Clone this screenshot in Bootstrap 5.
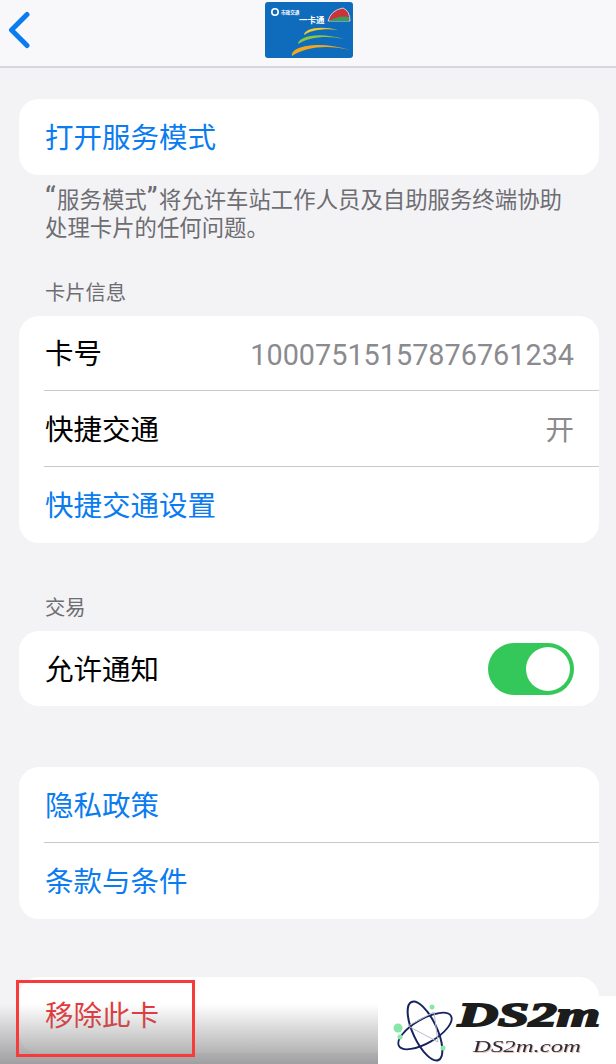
<!DOCTYPE html>
<html lang="zh">
<head>
  <meta charset="UTF-8" />
  <meta name="viewport" content="width=device-width, initial-scale=1">
  <title>一卡通</title>
  <link href="https://cdn.jsdelivr.net/npm/bootstrap@5.3.3/dist/css/bootstrap.min.css" rel="stylesheet">
  <style>
    html, body { height: 1064px; overflow: hidden; }
    body { background: #f3f3f6; font-family: "Roboto", "Noto Sans CJK SC", sans-serif; color: #000; position: relative; }
    .top-bar { height: 68px; background: #f8f8fa; border-bottom: 2px solid #d8d8dc; padding-left: 8px; }
    .back-icon { display: block; }
    .card-pic { display: block; margin-top: 2px; }
    .page-body { padding: 31px 17px 0 19px; }
    .group-box { background: #fff; border-radius: 20px; overflow: hidden; }
    .row-item { height: 75.7px; margin-left: 25px; padding: 5px 25px 0 1px; font-size: 28.5px; line-height: 1; border-bottom: 1px solid #c9c9cc; }
    .row-item:last-child { border-bottom: 0; }
    .row-blue { color: #0a7cf0; }
    .row-value { color: #8b8b8f; }
    .row-num { font-size: 28.8px; letter-spacing: 0; }
    .group-note { color: #6d6d72; font-size: 22.4px; line-height: 28px; padding: 8px 26px 0 26px; }
    .quote-mark { font-size: 30px; line-height: 1; letter-spacing: 1.5px; }
    .group-head { color: #6d6d72; font-size: 20.3px; line-height: 28px; padding-left: 26px; margin-bottom: 9px; }
    .head-first { margin-top: 37px; }
    .head-second { margin-top: 51px; }
    .gap-big { margin-top: 61px; }
    .gap-big2 { margin-top: 58px; }
    .row-red { color: #e6393a; }
    .ios-switch { width: 86px; height: 52px; margin-top: -5px; border-radius: 26px; background: #34c759; position: relative; }
    .ios-knob { position: absolute; top: 4px; right: 4px; width: 44px; height: 44px; border-radius: 50%; background: #fff; }
    .shade-bottom { position: absolute; left: 0; right: 0; top: 1004px; height: 60px; background: linear-gradient(rgba(120,120,122,0), rgba(120,120,122,.68)); }
    .red-mark { position: absolute; left: 16px; top: 980px; width: 179px; height: 77px; border: 3px solid #f73a3a; }
    .logo-box { position: absolute; left: 378px; top: 996px; width: 238px; height: 68px; background: #fff; }
    .logo-box svg { display: block; }
    .logo-big { font-family: "Liberation Serif", serif; font-weight: 700; font-style: italic; font-size: 33px; fill: #1c1c1c; stroke: #1c1c1c; stroke-width: 1.8px; }
    .logo-small { font-family: "Liberation Serif", serif; font-style: italic; font-size: 16px; fill: #2c2c3a; filter: drop-shadow(1px 1px 0 #e9bfb0); }
    .pic-small { font-family: "Noto Sans CJK SC", sans-serif; fill: #fff; font-weight: 700; }
  </style>
</head>
<body>

  <!-- Header -->
  <div class="top-bar d-flex position-relative">
    <svg class="back-icon mt-2" width="26" height="46" viewBox="0 0 26 46">
      <path d="M19 6.5 L3.5 22 L19 37.5" fill="none" stroke="#0a7cf0" stroke-width="5" stroke-linecap="round" stroke-linejoin="round"/>
    </svg>
    <svg class="card-pic position-absolute top-0" style="left:265px" width="88" height="56" viewBox="0 0 88 56">
      <rect width="88" height="56" rx="3" fill="#0f6cbd"/>
      <circle cx="10" cy="10" r="3.2" fill="none" stroke="#fff" stroke-width="1.6"/>
      <text class="pic-small" x="16" y="12" font-size="4.6">市政交通</text>
      <text class="pic-small" x="34" y="21" font-size="8.5">一卡通</text>
      <path d="M63 19 Q66 8 78 6 Q85 9 85 19 Z" fill="#c9333b" stroke="#fff" stroke-width=".7"/>
      <path d="M64 19 Q74 13 84 15 L84 19 Z" fill="#3d9a58"/>
      <path d="M39 33 C39 27 54 23 73 28 C60 26 46 28 39 33Z" fill="#eecb2a"/>
      <path d="M33 42 C33 35 52 29 79 37 C62 33 44 35 33 42Z" fill="#8cc63f"/>
      <path d="M27 54 C25 45 52 38 85 48 C64 43 42 44 27 54Z" fill="#f2a81d"/>
    </svg>
  </div>

  <div class="page-body">
    <div class="group-box">
      <div class="row-item row-blue d-flex align-items-center">打开服务模式</div>
    </div>
    <div class="group-note"><span class="quote-mark">“</span>服务模式<span class="quote-mark">”</span>将允许车站工作人员及自助服务终端协助<br>处理卡片的任何问题。</div>

    <div class="group-head head-first">卡片信息</div>
    <div class="group-box">
      <div class="row-item d-flex align-items-center justify-content-between">
        <span>卡号</span><span class="row-value row-num">10007515157876761234</span>
      </div>
      <div class="row-item d-flex align-items-center justify-content-between">
        <span>快捷交通</span><span class="row-value">开</span>
      </div>
      <div class="row-item row-blue d-flex align-items-center">快捷交通设置</div>
    </div>

    <div class="group-head head-second">交易</div>
    <div class="group-box">
      <div class="row-item d-flex align-items-center justify-content-between">
        <span>允许通知</span>
        <div class="ios-switch"><div class="ios-knob"></div></div>
      </div>
    </div>

    <div class="group-box gap-big">
      <div class="row-item row-blue d-flex align-items-center">隐私政策</div>
      <div class="row-item row-blue d-flex align-items-center">条款与条件</div>
    </div>

    <div class="group-box gap-big2">
      <div class="row-item row-red d-flex align-items-center">移除此卡</div>
    </div>
  </div>

  <!-- Overlays from the screenshot -->
  <div class="shade-bottom"></div>
  <div class="red-mark"></div>
  <div class="logo-box">
    <svg width="238" height="68" viewBox="0 0 238 68">
      <g fill="none" stroke="#16245e" stroke-width="2">
        <ellipse cx="47" cy="35" rx="12" ry="32" transform="rotate(-25 47 35)"/>
        <ellipse cx="47" cy="35" rx="12" ry="30" transform="rotate(60 47 35)" stroke-width="1.8"/>
      </g>
      <path d="M30 30 L56 16 L60 46 Z" fill="none" stroke="#b9bcc8" stroke-width="1"/>
      <circle cx="20" cy="32" r="4.5" fill="#86e8a8"/>
      <circle cx="22" cy="41" r="2.5" fill="#86e8a8"/>
      <circle cx="54" cy="11" r="2.5" fill="#86e8a8"/>
      <circle cx="65" cy="52" r="2.5" fill="#86e8a8"/>
      <text class="logo-big" x="80" y="29.5" textLength="142" lengthAdjust="spacingAndGlyphs">DS2m</text>
      <text class="logo-small" x="95" y="56" textLength="108" lengthAdjust="spacingAndGlyphs">DS2m.com</text>
    </svg>
  </div>

  <script src="https://cdn.jsdelivr.net/npm/bootstrap@5.3.3/dist/js/bootstrap.bundle.min.js"></script>
</body>
</html>
